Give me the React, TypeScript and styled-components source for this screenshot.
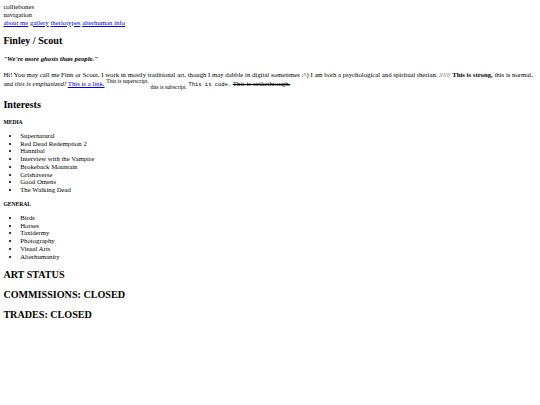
import React from "react";
import styled, { createGlobalStyle } from "styled-components";

const Global = createGlobalStyle`
  html, body { margin: 0; padding: 0; background: #ffffff; }
`;

const Page = styled.div`
  padding: 3.375px;
  font-family: "Liberation Serif", "Times New Roman", serif;
  font-size: 6.75px;
  line-height: 1.15;
  color: #000000;
`;

const Line = styled.div``;

const NavLinks = styled.nav`
  display: block;
`;

const Link = styled.a`
  color: #0000ee;
  text-decoration: underline;
`;

const Title = styled.h2`
  font-size: 1.5em;
  margin: 0.83em 0;
  font-weight: bold;
`;

const Quote = styled.h4`
  font-size: 1em;
  margin: 8.6px 0 8.4px;
  font-weight: bold;
  font-style: italic;
`;

const Para = styled.p`
  margin: 1em 0;
`;

const Sup = styled.sup`
  font-size: smaller;
  line-height: 1;
`;

const Sub = styled.sub`
  font-size: smaller;
  line-height: 1;
`;

const Code = styled.code`
  font-family: "Liberation Mono", "Courier New", monospace;
  font-size: 5.48px;
`;

const SubHeading = styled.h5`
  font-size: 0.83em;
  margin: 6px 0;
  font-weight: bold;
`;

const List = styled.ul`
  margin: 1em 0;
  padding-left: 16.875px;
  list-style: disc;
`;

const media = [
  "Supernatural",
  "Red Dead Redemption 2",
  "Hannibal",
  "Interview with the Vampire",
  "Brokeback Mountain",
  "Grishaverse",
  "Good Omens",
  "The Walking Dead",
];

const general = ["Birds", "Horses", "Taxidermy", "Photography", "Visual Arts", "Alterhumanity"];

export default function App() {
  return (
    <>
      <Global />
      <Page>
        <Line>colliebones</Line>
        <Line>navigation</Line>
        <NavLinks>
          <Link href="#">about me</Link> <Link href="#">gallery</Link>{" "}
          <Link href="#">theriotypes</Link> <Link href="#">alterhuman info</Link>
        </NavLinks>
        <Title>Finley / Scout</Title>
        <Quote>"We're more ghosts than people."</Quote>
        <Para>
          Hi! You may call me Finn or Scout. I work in mostly traditional art, though I may dabble in digital
          sometimes :^) I am both a psychological and spiritual therian. ////// <strong>This is strong,</strong> this
          is normal, and <em>this is emphasized!</em> <Link href="#">This is a link.</Link>{" "}
          <Sup>This is superscript.</Sup> <Sub>this is subscript.</Sub> <Code>This is code.</Code>{" "}
          <s>This is strikethrough.</s>
        </Para>
        <Title>Interests</Title>
        <SubHeading>MEDIA</SubHeading>
        <List>
          {media.map((m) => (
            <li key={m}>{m}</li>
          ))}
        </List>
        <SubHeading>GENERAL</SubHeading>
        <List>
          {general.map((g) => (
            <li key={g}>{g}</li>
          ))}
        </List>
        <Title>ART STATUS</Title>
        <Title>COMMISSIONS: CLOSED</Title>
        <Title>TRADES: CLOSED</Title>
      </Page>
    </>
  );
}
